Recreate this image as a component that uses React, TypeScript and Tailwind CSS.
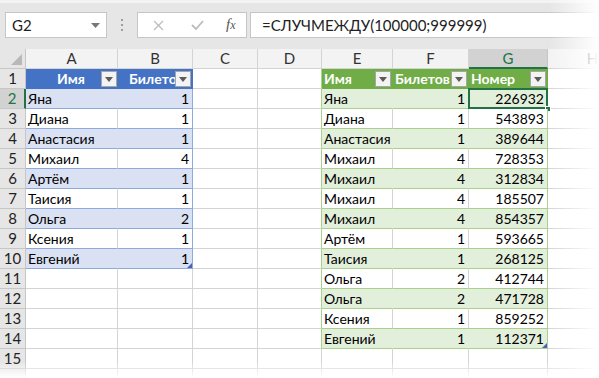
import React from 'react';

// ширины колонок листа (заголовок строк + A..H)
const colW = [26, 92, 75, 65, 64, 71, 76, 79, 90];
const letters = ['A', 'B', 'C', 'D', 'E', 'F', 'G', 'H'];

const left: [string, number][] = [
    ['Яна', 1], ['Диана', 1], ['Анастасия', 1], ['Михаил', 4], ['Артём', 1],
    ['Таисия', 1], ['Ольга', 2], ['Ксения', 1], ['Евгений', 1],
];

const right: [string, number, number][] = [
    ['Яна', 1, 226932], ['Диана', 1, 543893], ['Анастасия', 1, 389644], ['Михаил', 4, 728353],
    ['Михаил', 4, 312834], ['Михаил', 4, 185507], ['Михаил', 4, 854357], ['Артём', 1, 593665],
    ['Таисия', 1, 268125], ['Ольга', 2, 412744], ['Ольга', 2, 471728], ['Ксения', 1, 859252],
    ['Евгений', 1, 112371],
];

const FilterBtn = () => (
    <div className="absolute right-[1px] top-[2px] w-[16px] h-[16px] bg-[#f3f3f3] border border-[#a6a6a6] flex items-center justify-center">
        <svg width="8" height="5" viewBox="0 0 8 5"><path d="M0 0h8L4 5z" fill="#5b5b5b" /></svg>
    </div>
);

const App: React.FC = () => {
    const rows = Array.from({ length: 16 }, (_, i) => i + 1);

    return (
        <div className="relative w-[599px] h-[378px] overflow-hidden bg-white font-['Lato',sans-serif] text-[14px] leading-[17px] text-black">
            {/* строка формул */}
            <div className="h-[49px] bg-[#e6e6e6] border-t-[3px] border-t-[#f3f3f3] flex items-center pb-[2px]">
                <div className="ml-[5px] w-[102px] h-[26px] bg-white border border-[#c6c6c6] flex items-center justify-between px-[6px]">
                    <span className="text-[15px] text-[#222]">G2</span>
                    <svg width="9" height="5" viewBox="0 0 9 5"><path d="M0 0h9L4.5 5z" fill="#777" /></svg>
                </div>
                <div className="w-[30px] flex flex-col items-center gap-[3px]">
                    <div className="w-[2px] h-[2px] bg-[#9e9e9e]" />
                    <div className="w-[2px] h-[2px] bg-[#9e9e9e]" />
                    <div className="w-[2px] h-[2px] bg-[#9e9e9e]" />
                </div>
                <div className="w-[110px] h-[26px] bg-white border border-[#c6c6c6] flex items-center">
                    <svg className="ml-[15px]" width="11" height="11" viewBox="0 0 11 11">
                        <path d="M1 1l9 9M10 1l-9 9" stroke="#bcbcbc" strokeWidth="1.3" />
                    </svg>
                    <svg className="ml-[27px]" width="13" height="10" viewBox="0 0 13 10">
                        <path d="M1 5l4 4 7-8" stroke="#bcbcbc" strokeWidth="1.8" fill="none" />
                    </svg>
                    <span className="ml-[22px] font-['Liberation_Serif',serif] italic text-[15px] text-[#555]">
                        f<span className="text-[12px]">x</span>
                    </span>
                </div>
                <div className="ml-[3px] flex-1 h-[26px] bg-white border border-[#c6c6c6] flex items-center pl-[11px]">
                    <span className="text-[15px] text-[#222]">=СЛУЧМЕЖДУ(100000;999999)</span>
                </div>
            </div>

            {/* лист */}
            <div className="grid" style={{ gridTemplateColumns: colW.map((w) => `${w}px`).join(' ') }}>
                {/* заголовки колонок */}
                <div className="h-[20px] bg-[#e6e6e6] border-r border-b border-[#c6c6c6] relative">
                    <svg className="absolute right-[3px] bottom-[3px]" width="11" height="11" viewBox="0 0 11 11">
                        <path d="M11 0v11H0z" fill="#b8b8b8" />
                    </svg>
                </div>
                {letters.map((l) =>
                    l === 'G' ? (
                        <div key={l} className="h-[20px] bg-[#d2d2d2] border-r border-[#c6c6c6] border-b-2 border-b-[#217346] flex items-center justify-center text-[15px] text-[#217346]">
                            {l}
                        </div>
                    ) : (
                        <div key={l} className="h-[20px] bg-[#f3f3f3] border-r border-b border-[#d4d4d4] flex items-center justify-center text-[15px] text-[#333]">
                            {l}
                        </div>
                    )
                )}

                {rows.map((r) => {
                    const sel = r === 2;
                    const lBand = r % 2 === 0;
                    const cells: React.ReactNode[] = [];

                    // номер строки
                    cells.push(
                        <div
                            key="n"
                            className={
                                sel
                                    ? 'h-[20px] bg-[#d2d2d2] border-b border-b-[#c6c6c6] border-r-2 border-r-[#217346] flex items-center justify-center text-[15px] text-[#217346]'
                                    : 'h-[20px] bg-[#e6e6e6] border-b border-r border-[#c6c6c6] flex items-center justify-center text-[15px] text-[#222]'
                            }
                        >
                            {r < 16 ? r : ''}
                        </div>
                    );

                    // таблица слева (A:B)
                    if (r === 1) {
                        cells.push(
                            <div key="a" className="h-[20px] relative bg-[#4472c4] border-b border-[#4472c4] flex items-end justify-center pb-[1px] text-white font-bold pr-[2px]">
                                Имя
                                <FilterBtn />
                            </div>,
                            <div key="b" className="h-[20px] relative bg-[#4472c4] border-b border-r border-[#4472c4] flex items-end pl-[11px] pb-[1px] text-white font-bold overflow-hidden whitespace-nowrap">
                                Билетов
                                <FilterBtn />
                            </div>
                        );
                    } else if (r <= 10) {
                        const [name, n] = left[r - 2];
                        const bg = lBand ? 'bg-[#d9e1f2]' : 'bg-white';
                        cells.push(
                            <div key="a" className={`h-[20px] ${bg} border-b border-b-[#8ea9db] border-r ${lBand ? 'border-r-[#d9e1f2]' : 'border-r-[#d4d4d4]'} flex items-end pl-[2px] pb-[1px]`}>
                                {name}
                            </div>,
                            <div key="b" className={`h-[20px] relative ${bg} border-b border-b-[#8ea9db] border-r border-r-[#8ea9db] flex items-end justify-end pr-[3px] pb-[1px]`}>
                                {n}
                                {r === 10 && (
                                    <svg className="absolute right-0 bottom-0" width="5" height="5" viewBox="0 0 5 5"><path d="M5 0v5H0z" fill="#4b62b5" /></svg>
                                )}
                            </div>
                        );
                    } else {
                        cells.push(
                            <div key="a" className="h-[20px] border-r border-b border-[#d4d4d4]" />,
                            <div key="b" className="h-[20px] border-r border-b border-[#d4d4d4]" />
                        );
                    }

                    // C, D
                    cells.push(
                        <div key="c" className="h-[20px] border-r border-b border-[#d4d4d4]" />,
                        <div key="d" className={`h-[20px] border-b border-b-[#d4d4d4] border-r ${r <= 14 ? 'border-r-[#a9d08e]' : 'border-r-[#d4d4d4]'}`} />
                    );

                    // таблица справа (E:G)
                    if (r === 1) {
                        const hd = 'h-[20px] relative bg-[#70ad47] border-b border-[#70ad47] flex items-end pl-[2px] pb-[1px] text-white font-bold overflow-hidden whitespace-nowrap';
                        cells.push(
                            <div key="e" className={`${hd} border-r`}>Имя<FilterBtn /></div>,
                            <div key="f" className={`${hd} border-r`}>Билетов<FilterBtn /></div>,
                            <div key="g" className={`${hd} border-r`}>Номер<FilterBtn /></div>
                        );
                    } else if (r <= 14) {
                        const [name, n, num] = right[r - 2];
                        const band = r % 2 === 0;
                        const bg = band ? 'bg-[#e2efda]' : 'bg-white';
                        const inner = band ? 'border-r-[#e2efda]' : 'border-r-[#d4d4d4]';
                        cells.push(
                            <div key="e" className={`h-[20px] ${bg} border-b border-b-[#a9d08e] border-r ${inner} flex items-end pl-[2px] pb-[1px]`}>
                                {name}
                            </div>,
                            <div key="f" className={`h-[20px] ${bg} border-b border-b-[#a9d08e] border-r ${inner} flex items-end justify-end pr-[3px] pb-[1px]`}>
                                {n}
                            </div>,
                            <div key="g" className={`h-[20px] relative ${bg} border-b border-b-[#a9d08e] border-r border-r-[#a9d08e] flex items-end justify-end pr-[3px] pb-[1px]`}>
                                {num}
                                {r === 14 && (
                                    <svg className="absolute right-0 bottom-0" width="5" height="5" viewBox="0 0 5 5"><path d="M5 0v5H0z" fill="#4b62b5" /></svg>
                                )}
                                {sel && (
                                    <>
                                        <div className="absolute left-[-1px] top-[-1px] right-[-1px] bottom-[-1px] border-2 border-[#217346]" />
                                        <div className="absolute right-[-4px] bottom-[-4px] w-[6px] h-[6px] bg-[#217346] border border-white" />
                                    </>
                                )}
                            </div>
                        );
                    } else {
                        cells.push(
                            <div key="e" className="h-[20px] border-r border-b border-[#d4d4d4]" />,
                            <div key="f" className="h-[20px] border-r border-b border-[#d4d4d4]" />,
                            <div key="g" className="h-[20px] border-r border-b border-[#d4d4d4]" />
                        );
                    }

                    cells.push(<div key="h" className="h-[20px] border-r border-b border-[#d4d4d4]" />);
                    return <React.Fragment key={r}>{cells}</React.Fragment>;
                })}
            </div>

            {/* затухание по краям */}
            <div className="absolute top-0 right-0 w-[50px] h-full bg-gradient-to-r from-transparent to-white pointer-events-none" />
            <div className="absolute left-0 bottom-0 w-full h-[16px] bg-gradient-to-b from-transparent to-white pointer-events-none" />
        </div>
    );
};

export default App;
